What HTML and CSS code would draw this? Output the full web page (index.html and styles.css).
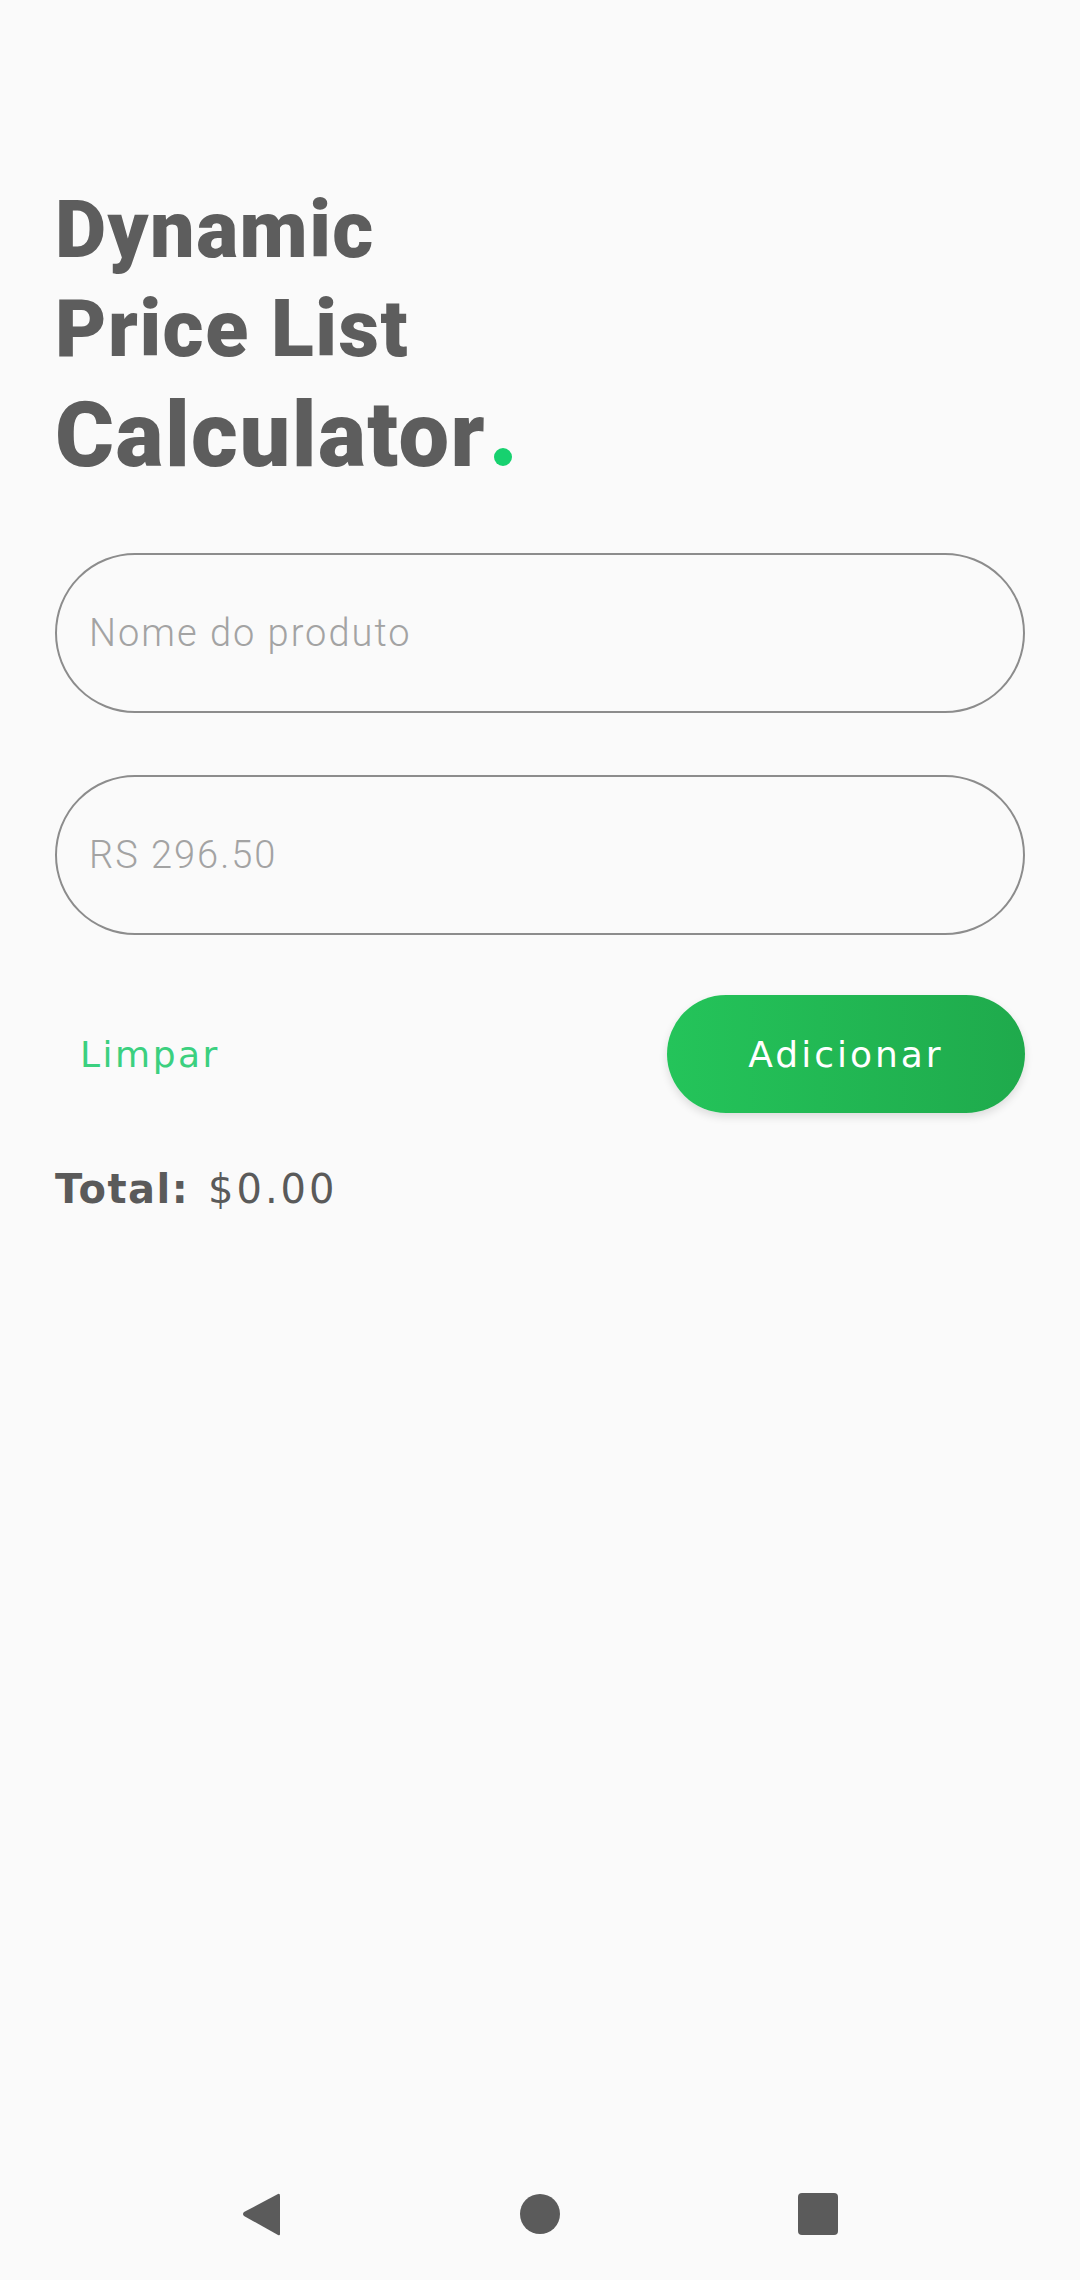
FILE: index.html
```html
<!DOCTYPE html>
<html lang="pt">
<head>
<meta charset="utf-8">
<title>Dynamic Price List Calculator</title>
<link rel="stylesheet" href="styles.css">
</head>
<body>
<div class="screen">
  <main class="content">
    <h1 class="title">
      <span class="line">Dynamic</span>
      <span class="line">Price List</span>
      <span class="line big">Calculator<span class="dot"></span></span>
    </h1>
    <form class="form">
      <input class="field" type="text" placeholder="Nome do produto">
      <input class="field" type="text" placeholder="RS 296.50">
      <div class="actions">
        <button type="button" class="btn-clear">Limpar</button>
        <button type="button" class="btn-add">Adicionar</button>
      </div>
    </form>
    <p class="total"><span class="total-label">Total:</span> <span class="total-value">$0.00</span></p>
  </main>
  <nav class="navbar">
    <svg class="nav-icon" width="40" height="44" viewBox="0 0 40 44"><path d="M36 2 Q38 1 38 4 L38 42 Q38 44 36 43 L2 24 Q0 22 2 20 Z" fill="#5b5b5b"/></svg>
    <svg class="nav-icon" width="40" height="44" viewBox="0 0 40 44"><circle cx="20" cy="22" r="20" fill="#5b5b5b"/></svg>
    <svg class="nav-icon" width="40" height="44" viewBox="0 0 40 44"><rect x="0" y="1" width="40" height="42" rx="4" fill="#5b5b5b"/></svg>
  </nav>
</div>
</body>
</html>
```
FILE: styles.css
```css
* { box-sizing: border-box; }
html, body { margin: 0; padding: 0; }
body {
  background: #fafafa;
  font-family: "DejaVu Sans", Lato, sans-serif;
}
.screen {
  width: 1080px;
  height: 2280px;
  display: flex;
  flex-direction: column;
}
.content {
  flex: 1;
  padding: 181px 55px 0 55px;
}
.title {
  margin: 0;
  font-family: Roboto, "Liberation Sans", sans-serif;
  font-weight: 900;
  color: #5d5d5d;
  letter-spacing: 1.5px;
}
.line {
  display: block;
  font-size: 79px;
  line-height: 99px;
}
.line.big {
  font-size: 90px;
  line-height: 114px;
}
.dot {
  display: inline-block;
  width: 18px;
  height: 18px;
  border-radius: 50%;
  background: #17d16f;
  margin-left: 8px;
  vertical-align: baseline;
}
.form {
  margin-top: 60px;
  display: flex;
  flex-direction: column;
  gap: 62px;
}
.field {
  width: 970px;
  height: 160px;
  border: 2px solid #8c8c8c;
  border-radius: 80px;
  background: transparent;
  padding: 0 32px;
  font-family: Roboto, sans-serif;
  font-weight: 300;
  font-size: 38px;
  letter-spacing: 2px;
  color: #555;
  outline: none;
}
.field::placeholder {
  color: #a3a3a3;
}
.actions {
  margin-top: -2px;
  display: flex;
  justify-content: space-between;
  align-items: center;
}
.btn-clear {
  border: none;
  background: transparent;
  padding: 0 0 0 25px;
  font-family: "DejaVu Sans", sans-serif;
  font-size: 36px;
  letter-spacing: 2.5px;
  color: #3bd07f;
}
.btn-add {
  width: 358px;
  height: 118px;
  border: none;
  border-radius: 59px;
  background: linear-gradient(90deg, #24c45a 0%, #1faa4c 100%);
  box-shadow: 0 4px 8px rgba(0, 0, 0, 0.12);
  color: #ffffff;
  font-family: "DejaVu Sans", sans-serif;
  font-size: 36px;
  letter-spacing: 3px;
}
.total {
  margin: 52px 0 0 0;
  font-size: 40px;
  line-height: 1.2;
  color: #5a5a5a;
}
.total-label {
  font-weight: 700;
  letter-spacing: 1.5px;
}
.total-value {
  font-weight: 400;
  letter-spacing: 3px;
  margin-left: 6px;
}
.navbar {
  height: 132px;
  display: flex;
  justify-content: center;
  align-items: center;
  gap: 238px;
}
.nav-icon {
  display: block;
}
```
